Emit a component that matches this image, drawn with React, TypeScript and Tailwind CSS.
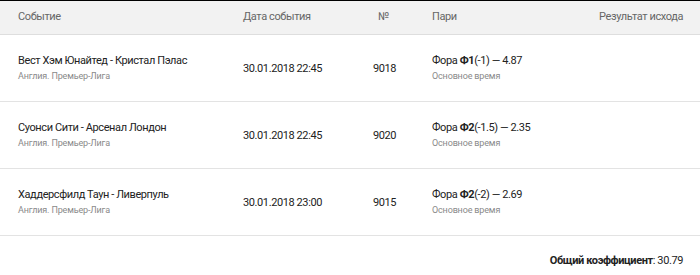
const ROWS = [
  {
    match: 'Вест Хэм Юнайтед - Кристал Пэлас',
    league: 'Англия. Премьер-Лига',
    date: '30.01.2018 22:45',
    num: '9018',
    side: 'Ф1',
    hcp: '(-1)',
    odd: '4.87',
  },
  {
    match: 'Суонси Сити - Арсенал Лондон',
    league: 'Англия. Премьер-Лига',
    date: '30.01.2018 22:45',
    num: '9020',
    side: 'Ф2',
    hcp: '(-1.5)',
    odd: '2.35',
  },
  {
    match: 'Хаддерсфилд Таун - Ливерпуль',
    league: 'Англия. Премьер-Лига',
    date: '30.01.2018 23:00',
    num: '9015',
    side: 'Ф2',
    hcp: '(-2)',
    odd: '2.69',
  },
];

const cols = 'grid grid-cols-[243px_100px_89px_1fr_auto]';

export default function App() {
  return (
    <div className="h-[275px] w-[700px] overflow-hidden border-t border-black bg-white font-['Roboto',sans-serif] text-[11px] tracking-[-0.4px] text-[#222]">
      {/* Шапка таблицы */}
      <div className={`${cols} h-[34px] items-center border-b border-[#dedede] bg-[#f2f2f2] text-[#666]`}>
        <div className="pl-[18px]">Событие</div>
        <div>Дата события</div>
        <div className="pl-[35px]">№</div>
        <div>Пари</div>
        <div className="pr-[17px] text-right">Результат исхода</div>
      </div>

      {ROWS.map((r) => (
        <div
          key={r.num}
          className={`${cols} h-[67px] items-center border-b border-[#e3e3e3]`}
        >
          <div className="pl-[18px]">
            <div className="leading-[15px]">{r.match}</div>
            <div className="mt-[2px] text-[9px] leading-[13px] tracking-[-0.15px] text-[#8a8a8a]">{r.league}</div>
          </div>
          <div className="pt-[2px]">{r.date}</div>
          <div className="pl-[30px] pt-[2px]">{r.num}</div>
          <div>
            <div className="leading-[15px]">
              Фора <b className="font-bold">{r.side}</b>
              {r.hcp} — {r.odd}
            </div>
            <div className="mt-[2px] text-[9px] leading-[13px] tracking-[-0.15px] text-[#8a8a8a]">Основное время</div>
          </div>
          <div className="pr-[17px]" />
        </div>
      ))}

      <div className="flex h-[37px] items-center justify-end pr-[17px] pt-[14px]">
        <span className="font-bold">Общий коэффициент</span>: 30.79
      </div>
    </div>
  );
}
